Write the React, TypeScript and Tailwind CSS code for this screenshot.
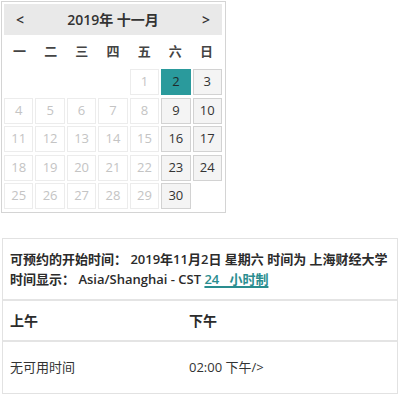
import React from "react";

const font = { fontFamily: '"Open Sans", "Noto Sans CJK SC", sans-serif' };

const weekdays = ["一", "二", "三", "四", "五", "六", "日"];
const available = [2, 3, 9, 10, 16, 17, 23, 24, 30];

function DayCell({ day }: { day: number | null }) {
  if (day === null) return <div className="h-[26px]" />;
  const selected = day === 2;
  const open = available.includes(day);
  let cls = "border-[#ececec] bg-white text-[#c4c4c4]";
  if (selected) cls = "border-[#2a9a9c] bg-[#2a9a9c] text-[#1f2b2b]";
  else if (open) cls = "border-[#d2d2d2] bg-[#f4f4f4] text-[#333]";
  return (
    <div className={`h-[26px] flex items-center justify-center border text-[13px] ${cls}`}>
      {day}
    </div>
  );
}

export default function App() {
  const cells: (number | null)[] = [null, null, null, null];
  for (let d = 1; d <= 30; d++) cells.push(d);

  return (
    <div className="w-[400px] h-[396px] bg-white text-[#333]" style={font}>
      <div className="ml-px mt-px w-[225px] border border-[#d4d4d4] p-[2px] pb-[3px]">
        <div className="w-[218px] h-[31px] bg-[#e9e9e9] flex items-center justify-between px-[12px] text-[14px] font-semibold">
          <span>&lt;</span>
          <span>2019年 十一月</span>
          <span>&gt;</span>
        </div>
        <div className="w-[218px] grid grid-cols-7 h-[34px] items-center text-[13px] font-semibold text-[#444]">
          {weekdays.map((w) => (
            <div key={w} className="text-center">{w}</div>
          ))}
        </div>
        <div className="w-[218px] grid grid-cols-7 gap-x-[2px] gap-y-[2.5px]">
          {cells.map((d, i) => (
            <DayCell key={i} day={d} />
          ))}
        </div>
      </div>

      <div className="ml-[2px] mt-[25px] w-[396px] border border-[#e2e2e2]">
        <div className="px-[7px] pt-[10px] pb-[10px] text-[13px] font-semibold leading-[20px] text-[#2b2b2b] whitespace-nowrap">
          <div>可预约的开始时间： 2019年11月2日 星期六 时间为 上海财经大学</div>
          <div>
            时间显示： Asia/Shanghai - CST{" "}
            <span className="text-[#2a8d8f] underline decoration-2 underline-offset-2">24&nbsp;&nbsp;&nbsp;小时制</span>
          </div>
        </div>
        <div className="flex h-[41px] items-center border-t-2 border-[#e4e4e4] text-[14px] font-semibold text-[#2b2b2b]">
          <div className="w-[186px] pl-[7px]">上午</div>
          <div>下午</div>
        </div>
        <div className="flex h-[53px] items-center border-t-2 border-[#e4e4e4] text-[13px] text-[#333]">
          <div className="w-[186px] pl-[7px]">无可用时间</div>
          <div>02:00 下午/&gt;</div>
        </div>
      </div>
    </div>
  );
}
